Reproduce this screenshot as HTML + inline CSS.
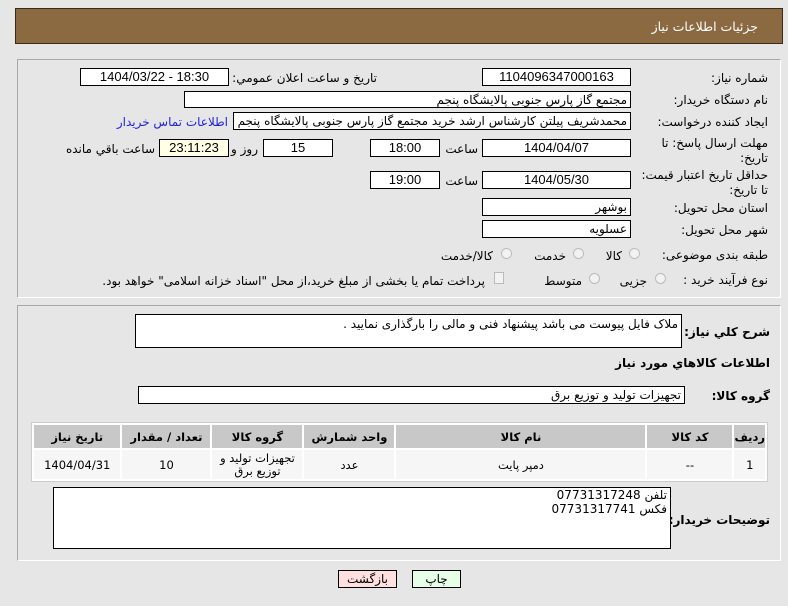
<!DOCTYPE html>
<html><head><meta charset="utf-8"><style>
*{margin:0;padding:0;box-sizing:border-box}
body{width:788px;height:606px;background:#e6e6e6;font-family:"DejaVu Sans","Liberation Sans",sans-serif;font-size:12px;color:#000;position:relative;overflow:hidden}
.a{position:absolute;white-space:nowrap}
.b{position:absolute;background:#fff;border:1px solid #000;text-align:center;line-height:16px;font-family:"Liberation Sans","DejaVu Sans",sans-serif;font-size:13px}
.r{direction:rtl;text-align:right;padding-right:3px;font-family:"DejaVu Sans",sans-serif;font-size:12px}
.l{position:absolute;direction:rtl;white-space:nowrap}
.rad{position:absolute;width:11px;height:11px;border-radius:50%;border:1px solid #bbb;background:#f2f2f2}
.panel{position:absolute;border:1px solid #a8a8a8;border-right-color:#fff;border-bottom-color:#fff}
table{position:absolute;border-collapse:separate;border-spacing:2px;background:#fff;border:1px solid #ccc}
td{text-align:center;font-size:11.5px}
th{background:#c8c8c8;font-size:11.5px;height:23px;font-weight:bold}
td{background:#f6f6f6;height:29px}
</style></head><body>
<div class="a" style="left:15px;top:8px;width:768px;height:36px;background:#8b6a41;border:1px solid #3a2b18"></div>
<div class="l" style="right:30px;top:19px;color:#fff;font-size:12.5px">جزئیات اطلاعات نیاز</div>

<div class="panel" style="left:17px;top:59px;width:764px;height:239px"></div>
<div class="panel" style="left:17px;top:305px;width:764px;height:256px"></div>

<div class="l" style="right:20px;top:71px">شماره نیاز:</div>
<div class="b" style="left:482px;top:68px;width:149px;height:18px">1104096347000163</div>
<div class="l" style="right:411px;top:71px">تاریخ و ساعت اعلان عمومي:</div>
<div class="b" style="left:80px;top:68px;width:149px;height:18px">1404/03/22 - 18:30</div>

<div class="l" style="right:20px;top:93px">نام دستگاه خریدار:</div>
<div class="b r" style="left:184px;top:91px;width:447px;height:17px">مجتمع گاز پارس جنوبی  پالایشگاه پنجم</div>

<div class="l" style="right:20px;top:115px">ایجاد کننده درخواست:</div>
<div class="b r" style="left:233px;top:112px;width:398px;height:18px;overflow:hidden">محمدشریف پیلتن کارشناس ارشد خرید مجتمع گاز پارس جنوبی  پالایشگاه پنجم</div>
<div class="l" style="right:560px;top:115px;color:#2222dd">اطلاعات تماس خریدار</div>

<div class="l" style="right:20px;top:136px;line-height:15px">مهلت ارسال پاسخ: تا<br>تاریخ:</div>
<div class="b" style="left:482px;top:139px;width:149px;height:18px">1404/04/07</div>
<div class="l" style="right:310px;top:142px">ساعت</div>
<div class="b" style="left:370px;top:139px;width:70px;height:18px">18:00</div>
<div class="b" style="left:263px;top:139px;width:70px;height:18px">15</div>
<div class="l" style="right:530px;top:142px">روز و</div>
<div class="b" style="left:159px;top:139px;width:70px;height:18px;background:#ffffe6">23:11:23</div>
<div class="l" style="right:633px;top:142px">ساعت باقي مانده</div>

<div class="l" style="right:20px;top:168px;line-height:15px">حداقل تاریخ اعتبار قیمت:<br>تا تاریخ:</div>
<div class="b" style="left:482px;top:171px;width:149px;height:18px">1404/05/30</div>
<div class="l" style="right:310px;top:174px">ساعت</div>
<div class="b" style="left:370px;top:171px;width:70px;height:18px">19:00</div>

<div class="l" style="right:20px;top:201px">استان محل تحویل:</div>
<div class="b r" style="left:482px;top:198px;width:149px;height:18px">بوشهر</div>
<div class="l" style="right:20px;top:223px">شهر محل تحویل:</div>
<div class="b r" style="left:482px;top:220px;width:149px;height:18px">عسلویه</div>

<div class="l" style="right:20px;top:248px">طبقه بندی موضوعی:</div>
<div class="rad" style="left:629px;top:248px"></div>
<div class="l" style="right:166px;top:249px">کالا</div>
<div class="rad" style="left:573px;top:248px"></div>
<div class="l" style="right:222px;top:249px">خدمت</div>
<div class="rad" style="left:501px;top:248px"></div>
<div class="l" style="right:295px;top:249px">کالا/خدمت</div>

<div class="l" style="right:20px;top:273px">نوع فرآیند خرید :</div>
<div class="rad" style="left:655px;top:273px"></div>
<div class="l" style="right:141px;top:274px">جزیی</div>
<div class="rad" style="left:589px;top:273px"></div>
<div class="l" style="right:206px;top:274px">متوسط</div>
<div class="a" style="left:494px;top:272px;width:10px;height:12px;border:1px solid #bbb;background:#f2f2f2"></div>
<div class="l" style="right:303px;top:274px">پرداخت تمام یا بخشی از مبلغ خرید،از محل "اسناد خزانه اسلامی" خواهد بود.</div>

<div class="l" style="right:18px;top:325px;font-weight:bold">شرح کلي نیاز:</div>
<div class="b r" style="left:135px;top:314px;width:547px;height:34px;line-height:18px">ملاک فایل پیوست می باشد پیشنهاد فنی و مالی را بارگذاری نمایید .</div>
<div class="l" style="right:18px;top:356px;font-weight:bold">اطلاعات کالاهاي مورد نیاز</div>
<div class="l" style="right:18px;top:389px;font-weight:bold">گروه کالا:</div>
<div class="b r" style="left:138px;top:386px;width:547px;height:18px">تجهیزات تولید و توزیع برق</div>

<table style="left:31px;top:422px;width:737px;direction:rtl">
<tr><th style="width:26px">ردیف</th><th style="width:85px">کد کالا</th><th style="width:249px">نام کالا</th><th style="width:90px">واحد شمارش</th><th style="width:90px">گروه کالا</th><th style="width:88px">تعداد / مقدار</th><th>تاریخ نیاز</th></tr>
<tr><td>1</td><td>--</td><td>دمپر پایت</td><td>عدد</td><td style="line-height:13px">تجهیزات تولید و<br>توزیع برق</td><td>10</td><td>1404/04/31</td></tr>
</table>

<div class="l" style="right:18px;top:513px;font-weight:bold">توضیحات خریدار:</div>
<div class="b r" style="left:53px;top:487px;width:618px;height:62px;line-height:14px">تلفن 07731317248<br>فکس 07731317741</div>

<div class="b" style="left:338px;top:570px;width:59px;height:18px;background:#ffe0e0;font-family:'DejaVu Sans',sans-serif;font-size:12px">بازگشت</div>
<div class="b" style="left:412px;top:570px;width:49px;height:18px;background:#e6ffe6;font-family:'DejaVu Sans',sans-serif;font-size:12px">چاپ</div>
</body></html>
